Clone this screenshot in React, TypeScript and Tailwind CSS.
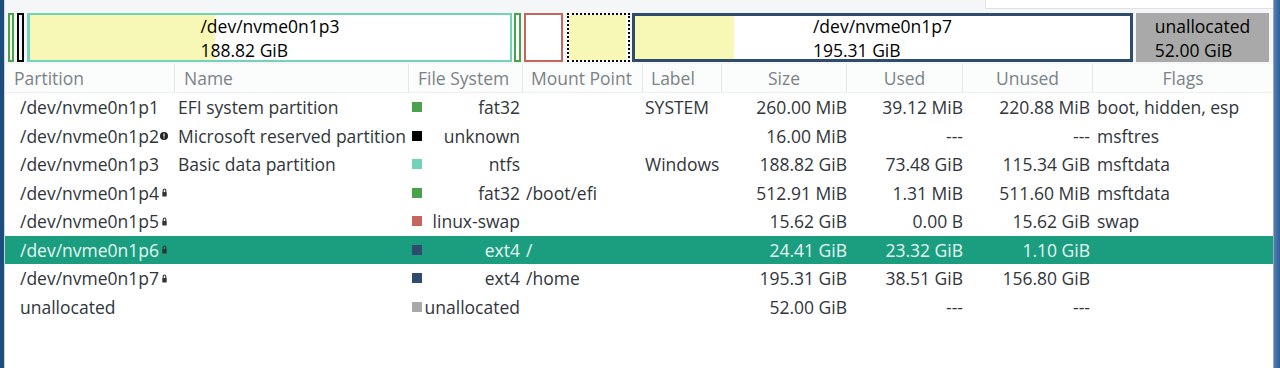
const rows = [
  { part: "/dev/nvme0n1p1", icon: "", name: "EFI system partition", color: "bg-[#4ca24c]", fs: "fat32", mount: "", label: "SYSTEM", size: "260.00 MiB", used: "39.12 MiB", unused: "220.88 MiB", flags: "boot, hidden, esp" },
  { part: "/dev/nvme0n1p2", icon: "info", name: "Microsoft reserved partition", color: "bg-black", fs: "unknown", mount: "", label: "", size: "16.00 MiB", used: "---", unused: "---", flags: "msftres" },
  { part: "/dev/nvme0n1p3", icon: "", name: "Basic data partition", color: "bg-[#72d3ba]", fs: "ntfs", mount: "", label: "Windows", size: "188.82 GiB", used: "73.48 GiB", unused: "115.34 GiB", flags: "msftdata" },
  { part: "/dev/nvme0n1p4", icon: "lock", name: "", color: "bg-[#4ca24c]", fs: "fat32", mount: "/boot/efi", label: "", size: "512.91 MiB", used: "1.31 MiB", unused: "511.60 MiB", flags: "msftdata" },
  { part: "/dev/nvme0n1p5", icon: "lock", name: "", color: "bg-[#c4665d]", fs: "linux-swap", mount: "", label: "", size: "15.62 GiB", used: "0.00 B", unused: "15.62 GiB", flags: "swap" },
  { part: "/dev/nvme0n1p6", icon: "lock", name: "", color: "bg-[#2f4c6c]", fs: "ext4", mount: "/", label: "", size: "24.41 GiB", used: "23.32 GiB", unused: "1.10 GiB", flags: "", selected: true },
  { part: "/dev/nvme0n1p7", icon: "lock", name: "", color: "bg-[#2f4c6c]", fs: "ext4", mount: "/home", label: "", size: "195.31 GiB", used: "38.51 GiB", unused: "156.80 GiB", flags: "" },
  { part: "unallocated", icon: "", name: "", color: "bg-[#a9a9a9]", fs: "unallocated", mount: "", label: "", size: "52.00 GiB", used: "---", unused: "---", flags: "" },
];

const Lock = () => (
  <svg width="5" height="9" viewBox="0 0 5 9" className="ml-[3px] shrink-0">
    <path d="M1.2 4V2.3a1.3 1.3 0 0 1 2.6 0V4" fill="none" stroke="#333" strokeWidth="1.1" />
    <rect x="0.3" y="4" width="4.4" height="4.5" rx="0.4" fill="#333" />
  </svg>
);

const Info = () => (
  <svg width="8" height="8" viewBox="0 0 8 8" className="ml-[1px] shrink-0">
    <circle cx="4" cy="4" r="4" fill="#222" />
    <rect x="3.4" y="1.5" width="1.2" height="3.2" fill="#fff" />
    <rect x="3.4" y="5.4" width="1.2" height="1.1" fill="#fff" />
  </svg>
);

const Header = () => (
  <div className="flex h-[29px] items-center text-[#7b8287] bg-[#fbfcfc] border-b border-[#eef0f1]">
    <div className="w-[170px] h-full flex items-center pl-[9px] border-r border-[#e4e6e8]">Partition</div>
    <div className="w-[234px] h-full flex items-center pl-[9px] border-r border-[#e4e6e8]">Name</div>
    <div className="w-[114px] h-full flex items-center pl-[9px] border-r border-[#e4e6e8]">File System</div>
    <div className="w-[120px] h-full flex items-center pl-[8px] border-r border-[#e4e6e8]">Mount Point</div>
    <div className="w-[79px] h-full flex items-center pl-[8px] border-r border-[#e4e6e8]">Label</div>
    <div className="w-[125px] h-full flex items-center justify-center border-r border-[#e4e6e8]">Size</div>
    <div className="w-[116px] h-full flex items-center justify-center border-r border-[#e4e6e8]">Used</div>
    <div className="w-[130px] h-full flex items-center justify-center border-r border-[#e4e6e8]">Unused</div>
    <div className="flex-1 h-full flex items-center justify-center">Flags</div>
  </div>
);

const DiskBar = () => (
  <div className="flex h-[49px] pl-[3px] text-black">
    <div className="w-[6px] border-2 border-[#4ca24c] bg-[#f6f8ee]" />
    <div className="w-[7px] ml-[3px] border-2 border-black bg-[#f4f4f4]" />
    <div className="w-[485px] ml-[3px] border-[2px] border-l-[3px] border-[#72d3ba] bg-white flex relative">
      <div className="w-[38.5%] bg-[#f8f8b6]" />
      <div className="absolute inset-0 flex justify-center items-center">
        <div className="leading-[24px]">
          <div>/dev/nvme0n1p3</div>
          <div>188.82 GiB</div>
        </div>
      </div>
    </div>
    <div className="w-[7px] ml-[2px] border-2 border-[#4ca24c] bg-white" />
    <div className="w-[39px] ml-[3px] border-2 border-[#c4665d] bg-white" />
    <div className="w-[63px] ml-[4px] border-2 border-dotted border-black bg-white">
      <div className="h-full w-[96%] bg-[#f8f8b6]" />
    </div>
    <div className="w-[501px] ml-[2px] border-[3px] border-[#2f4c6c] bg-white flex relative">
      <div className="w-[20%] bg-[#f8f8b6]" />
      <div className="absolute inset-0 flex justify-center items-center">
        <div className="leading-[24px]">
          <div>/dev/nvme0n1p7</div>
          <div>195.31 GiB</div>
        </div>
      </div>
    </div>
    <div className="w-[133px] ml-[3px] bg-[#a9a9a9] flex justify-center items-center">
      <div className="leading-[24px]">
        <div>unallocated</div>
        <div>52.00 GiB</div>
      </div>
    </div>
  </div>
);

export default function App() {
  return (
    <div className="w-[1280px] h-[368px] flex bg-white font-['Open_Sans',sans-serif] text-[17.5px] overflow-hidden">
      <div className="w-[4px] bg-[#1d4d7c]" />
      <div className="w-[1px] bg-[#c9d3dc]" />
      <div className="flex-1 flex flex-col">
        <div className="bg-[#f4f6f7] pb-[2px]">
          <div className="flex h-[13px]">
            <div className="flex-1" />
            <div className="w-[288px] h-[9px] bg-white border-b border-l border-[#dfe2e5]" />
          </div>
          <DiskBar />
        </div>
        <Header />
        <div className="text-[#31363b]">
          {rows.map((r) => (
            <div
              key={r.part}
              className={`flex h-[28.5px] items-center whitespace-nowrap ${r.selected ? "bg-[#1b9d80] text-[#e6f6f1]" : ""}`}
            >
              <div className="w-[170px] pl-[15px] flex items-center">
                <span>{r.part}</span>
                {r.icon === "lock" && <Lock />}
                {r.icon === "info" && <Info />}
              </div>
              <div className="w-[234px] pl-[3px]">{r.name}</div>
              <div className="w-[114px] pl-[3px] pr-[3px] flex items-center">
                <span className={`w-[10px] h-[10px] shrink-0 ${r.color}`} />
                <span className="flex-1 text-right">{r.fs}</span>
              </div>
              <div className="w-[120px] pl-[3px]">{r.mount}</div>
              <div className="w-[79px] pl-[2px]">{r.label}</div>
              <div className="w-[125px] text-right">{r.size}</div>
              <div className="w-[116px] text-right">{r.used}</div>
              <div className="w-[130px] text-right pr-[3px]">{r.unused}</div>
              <div className="flex-1 pl-[4px]">{r.flags}</div>
            </div>
          ))}
        </div>
      </div>
      <div className="w-[1px] bg-[#9aa7b4]" />
      <div className="w-[6px] bg-gradient-to-r from-[#4f7fb3] to-[#2e5f95]" />
    </div>
  );
}
